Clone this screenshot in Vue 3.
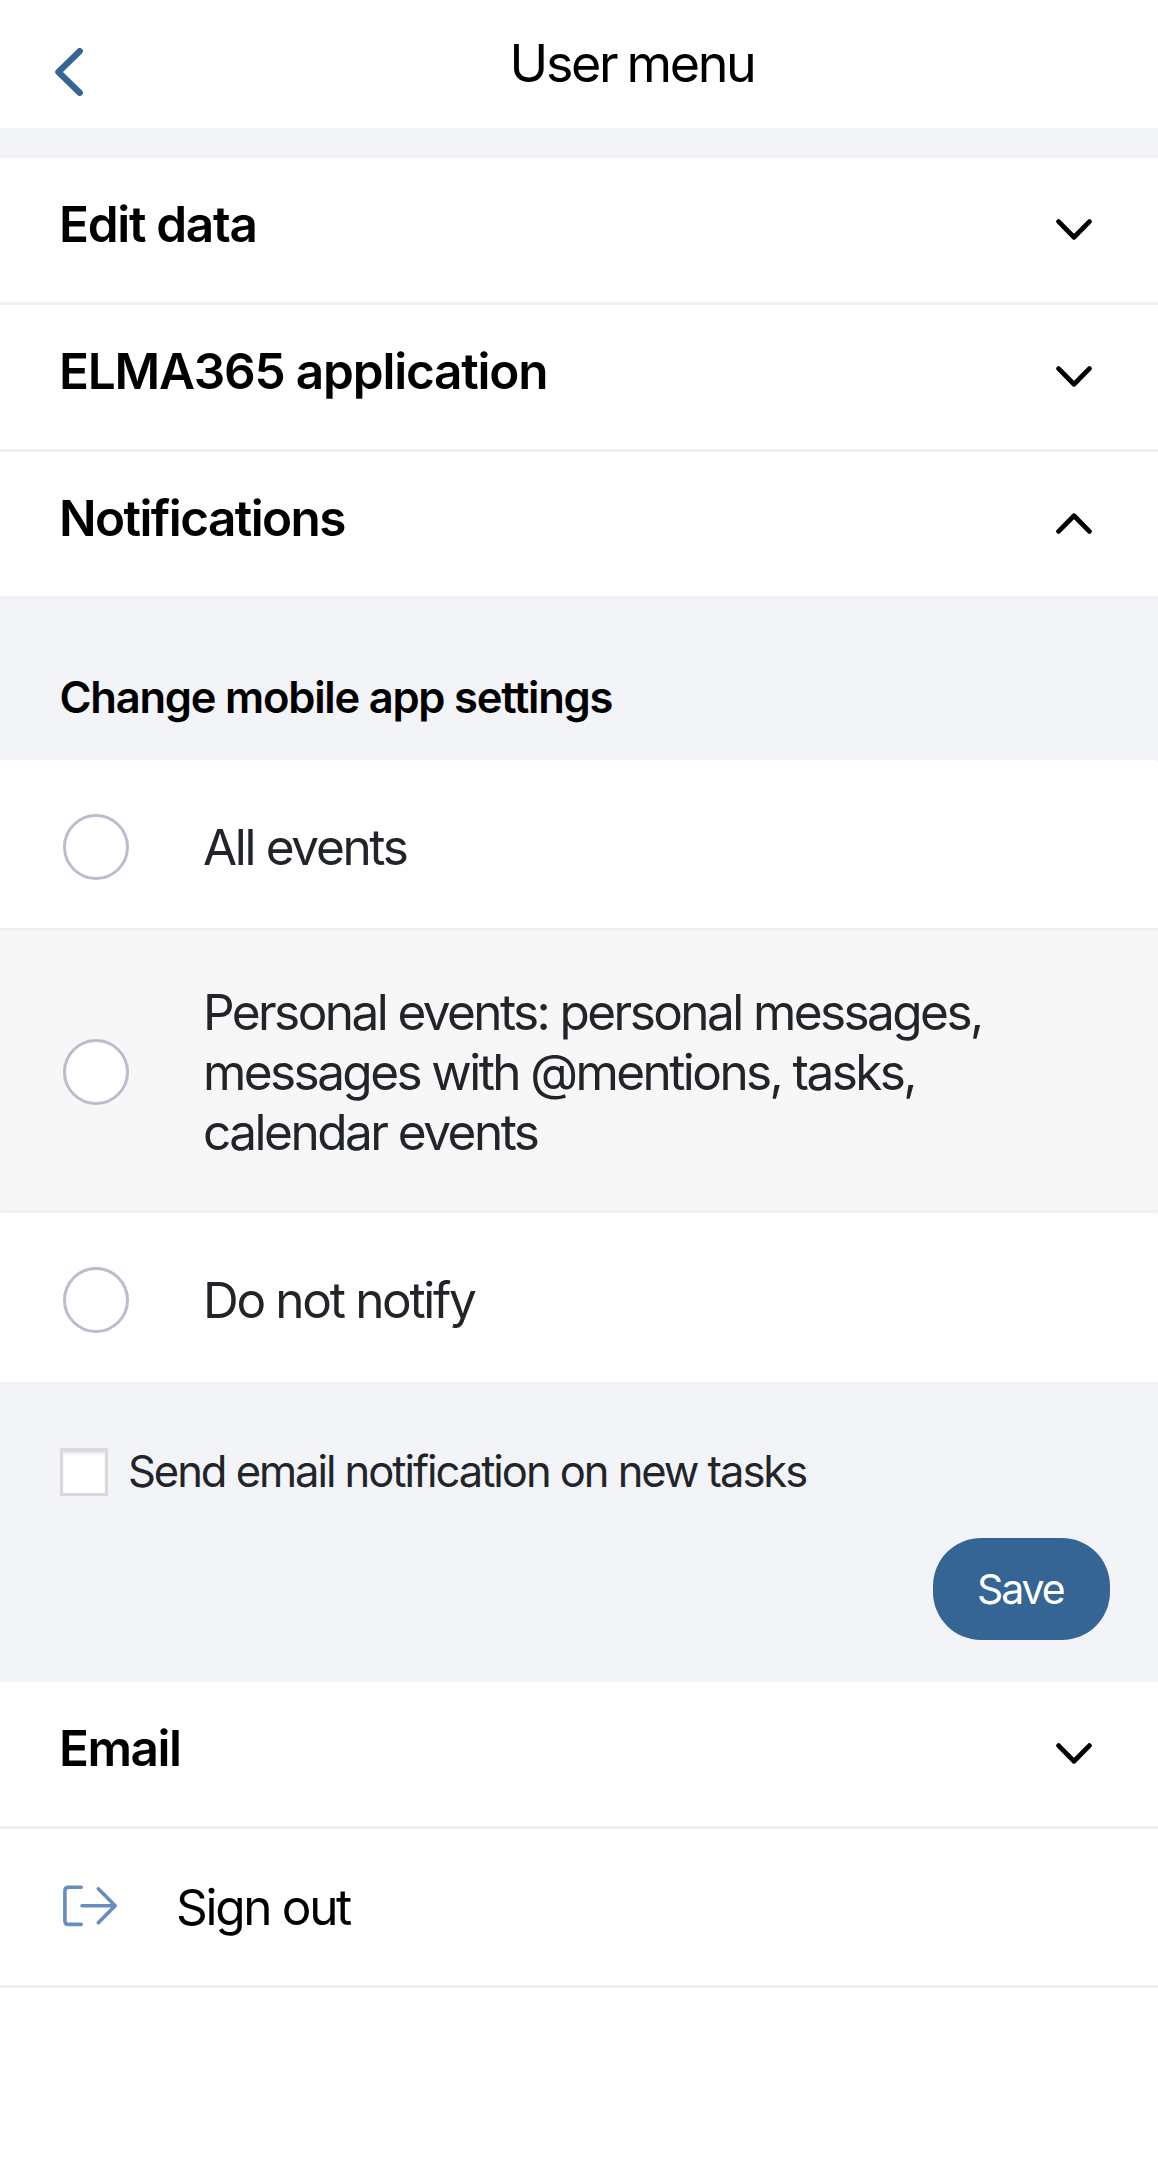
<script setup>
import { ref } from 'vue'

const topSections = [
  { key: 'edit', label: 'Edit data', open: false },
  { key: 'app', label: 'ELMA365 application', open: false },
  { key: 'notify', label: 'Notifications', open: true }
]

const options = [
  { key: 'all', lines: ['All events'] },
  {
    key: 'personal',
    lines: [
      'Personal events: personal messages,',
      'messages with @mentions, tasks,',
      'calendar events'
    ]
  },
  { key: 'none', lines: ['Do not notify'] }
]

const selected = ref(null)
const emailOnTasks = ref(false)
</script>

<template>
  <main class="screen">
    <header class="topbar">
      <button class="back" aria-label="Back">
        <svg width="28" height="48" viewBox="0 0 28 48" fill="none">
          <path d="M24.7 3.2 3.4 24l21.3 20.8" stroke="#356594" stroke-width="6.4" stroke-linecap="round" stroke-linejoin="round" />
        </svg>
      </button>
      <h1 class="title">User menu</h1>
    </header>

    <section class="menu">
      <button v-for="s in topSections" :key="s.key" class="row">
        <span class="label" :class="s.key">{{ s.label }}</span>
        <svg class="chevron" :class="{ open: s.open }" width="36" height="22" viewBox="0 0 36 22" fill="none">
          <path d="M2.6 2.6 18 18.2 33.4 2.6" stroke="#000" stroke-width="4.8" stroke-linecap="round" stroke-linejoin="round" />
        </svg>
      </button>
    </section>

    <section class="panel">
      <h2 class="panel-title">Change mobile app settings</h2>

      <label v-for="o in options" :key="o.key" class="option" :class="o.key" @click="selected = o.key">
        <span class="radio" />
        <span class="option-text">
          <span v-for="(line, i) in o.lines" :key="i" class="line">{{ line }}</span>
        </span>
      </label>

      <div class="footer">
        <label class="check" @click="emailOnTasks = !emailOnTasks">
          <span class="box" />
          <span class="check-text">Send email notification on new tasks</span>
        </label>
        <button class="save">Save</button>
      </div>
    </section>

    <section class="menu">
      <button class="row">
        <span class="label email">Email</span>
        <svg class="chevron" width="36" height="22" viewBox="0 0 36 22" fill="none">
          <path d="M2.6 2.6 18 18.2 33.4 2.6" stroke="#000" stroke-width="4.8" stroke-linecap="round" stroke-linejoin="round" />
        </svg>
      </button>
      <button class="signout">
        <svg width="56" height="42" viewBox="0 0 56 42" fill="none" stroke="#668dbe" stroke-width="3.6" stroke-linecap="round" stroke-linejoin="round">
          <path d="M18.2 2.2H5.6Q1.9 2.2 1.9 5.9v29.8Q1.9 39.4 5.6 39.4h12.6" />
          <path d="M19 20.8h33.2M35.3 3.8 52.2 20.8 35.3 37.8" />
        </svg>
        <span class="signout-text">Sign out</span>
      </button>
    </section>
  </main>
</template>

<style>
body {
  margin: 0;
  background: #fff;
}
</style>

<style scoped>
.screen {
  box-sizing: border-box;
  width: 100%;
  min-height: 2182px;
  background: #fff;
  color: #000;
  font-family: Inter, "Liberation Sans", sans-serif;
}

button {
  display: block;
  margin: 0;
  padding: 0;
  border: 0;
  background: none;
  color: inherit;
  font: inherit;
  text-align: left;
}

svg {
  display: block;
  flex: none;
}

.topbar {
  box-sizing: border-box;
  display: grid;
  grid-template-columns: 108px 1fr;
  align-items: start;
  height: 158px;
  border-bottom: 30px solid #f2f4f8;
}

.back {
  padding: 48px 0 0 55px;
}

.title {
  margin: 0;
  padding: 32px 2px 0 0;
  font-size: 52px;
  font-weight: 400;
  line-height: 64px;
  letter-spacing: -2.35px;
  word-spacing: -2px;
  text-align: center;
}

.row {
  box-sizing: border-box;
  display: flex;
  justify-content: space-between;
  align-items: flex-start;
  width: 100%;
  height: 147px;
  padding: 36px 66px 0 59px;
  border-bottom: 3px solid #efeff4;
}

.label {
  font-size: 49.5px;
  font-weight: 600;
  line-height: 60px;
  letter-spacing: -1.2px;
}

.label.edit {
  letter-spacing: -1.3px;
}

.label.notify {
  letter-spacing: -1.58px;
}

.label.email {
  letter-spacing: -1.48px;
}

.chevron {
  margin-top: 25px;
}

.chevron.open {
  margin-top: 24px;
  transform: scaleY(-1);
}

.panel {
  background: #f2f4f8;
}

.panel-title {
  box-sizing: border-box;
  height: 161px;
  margin: 0;
  padding: 68px 60px 0 59.5px;
  font-size: 43.5px;
  font-weight: 600;
  line-height: 60px;
  letter-spacing: -1.23px;
}

.option {
  box-sizing: border-box;
  display: flex;
  align-items: flex-start;
  gap: 74px;
  height: 171px;
  padding: 54px 60px 0 63px;
  background: #fff;
  border-bottom: 3px solid #efeff4;
  border-radius: 3px;
  color: #212529;
}

.option.personal {
  height: 282px;
  padding-top: 51px;
  background: #f7f7f7;
}

.option.personal .radio {
  margin-top: 57px;
}

.option.none {
  height: 172px;
}

.radio {
  box-sizing: border-box;
  flex: none;
  width: 66px;
  height: 66px;
  border: 3px solid #bdbccd;
  border-radius: 50%;
  background: #fff;
}

.option-text {
  padding-top: 3px;
  font-size: 49.5px;
  line-height: 60px;
  letter-spacing: -2.32px;
}

.option.personal .option-text {
  padding-top: 0;
  letter-spacing: -2.58px;
}

.option.personal .line:last-child {
  letter-spacing: -2.5px;
}

.line {
  display: block;
  white-space: nowrap;
}

.footer {
  box-sizing: border-box;
  display: flex;
  flex-direction: column;
  height: 297px;
  padding: 63px 48px 0 60px;
}

.check {
  display: flex;
  gap: 20px;
  color: #212529;
}

.box {
  box-sizing: border-box;
  flex: none;
  width: 48px;
  height: 48px;
  border: 3px solid #d9d9d9;
  background: #fff;
  box-shadow: inset 0 3px 3px -1px #dcdcdc;
}

.check-text {
  margin-top: -7px;
  height: 60px;
  font-size: 43.5px;
  line-height: 60px;
  letter-spacing: -2.04px;
  white-space: nowrap;
}

.save {
  box-sizing: border-box;
  align-self: flex-end;
  width: 177px;
  height: 102px;
  margin-top: 37px;
  padding-left: 44px;
  border-radius: 48px;
  background: #346594;
  color: #fff;
  font-size: 41px;
  line-height: 103px;
  letter-spacing: -2.1px;
}

.signout {
  box-sizing: border-box;
  display: flex;
  align-items: flex-start;
  gap: 57px;
  width: 100%;
  height: 159px;
  padding: 56px 60px 0 63px;
  border-bottom: 3px solid #efeff4;
}

.signout-text {
  margin-top: -8px;
  font-size: 49.5px;
  line-height: 60px;
  letter-spacing: -2.3px;
}
</style>
